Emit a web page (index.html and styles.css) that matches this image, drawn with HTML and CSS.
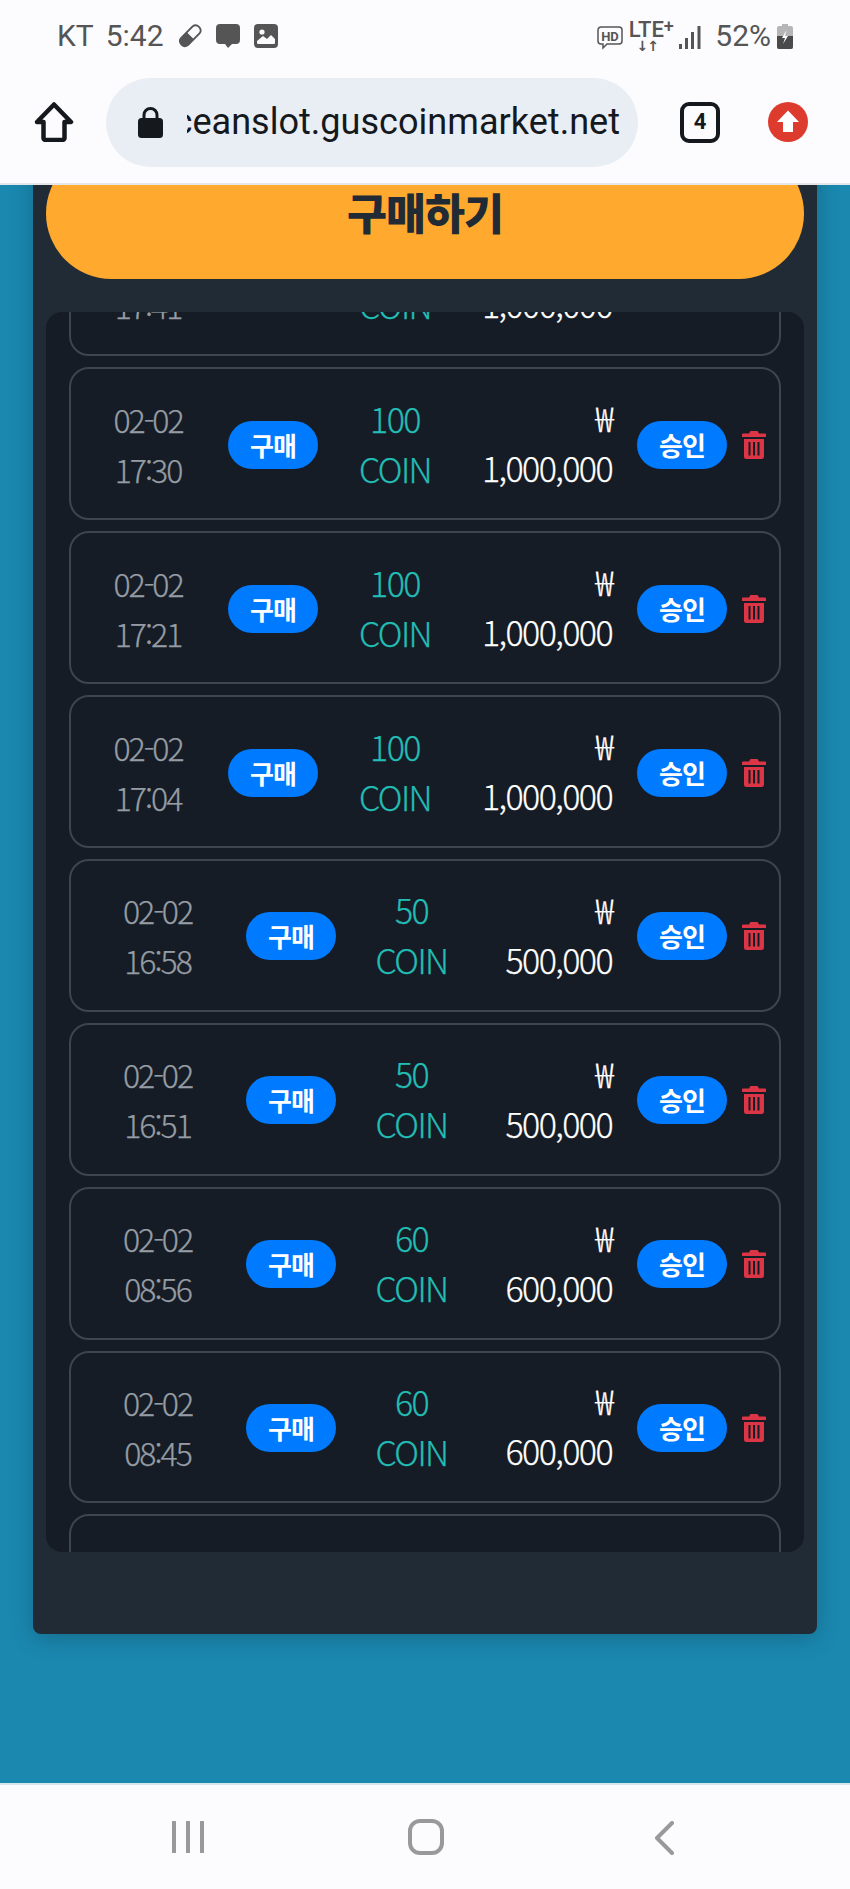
FILE: index.html
```html
<!DOCTYPE html>
<html lang="ko">
<head>
<meta charset="utf-8">
<title>구매하기</title>
<link rel="stylesheet" href="styles.css">
</head>
<body>
<div class="phone">
  <header class="chrome">
    <div class="status">
      <div class="status-left">
        <span class="carrier">KT</span>
        <span class="clock">5:42</span>
        <svg class="si si-pill" viewBox="0 0 24 24"><path d="M14.5 2.5a5 5 0 0 1 7 7L10 21a5 5 0 0 1-7-7z" fill="#fcfcfe" stroke="#555" stroke-width="1.8"/><path d="M8.8 8.2l7 7L10 21a5 5 0 0 1-7-7z" fill="#555"/></svg>
        <svg class="si si-chat" viewBox="0 0 24 24"><path d="M4 0h16a4 4 0 0 1 4 4v12a4 4 0 0 1-4 4h-4l-4 4-3-4H4a4 4 0 0 1-4-4V4a4 4 0 0 1 4-4z" fill="#555"/></svg>
        <svg class="si si-img" viewBox="0 0 24 24"><rect width="24" height="24" rx="4" fill="#555"/><path d="M3 17l6-5 4 3 4-4 4 4v4a1 1 0 0 1-1 1H4a1 1 0 0 1-1-1z" fill="#fcfcfe"/><circle cx="8" cy="8" r="2.6" fill="#fcfcfe"/></svg>
      </div>
      <div class="status-right">
        <svg class="si-hd" viewBox="0 0 26 24"><path d="M4 1h18a3 3 0 0 1 3 3v11a3 3 0 0 1-3 3H10l-4 4v-4H4a3 3 0 0 1-3-3V4a3 3 0 0 1 3-3z" fill="none" stroke="#555" stroke-width="1.5"/><text x="13" y="14.5" text-anchor="middle" class="hd-text">HD</text></svg>
        <div class="lte">
          <span class="lte-text">LTE<sup>+</sup></span>
          <span class="lte-arrows">↓↑</span>
        </div>
        <svg class="si-signal" viewBox="0 0 22 24"><rect x="0" y="18" width="3" height="5" fill="#555"/><rect x="6" y="12" width="3" height="11" fill="#555"/><rect x="12" y="6" width="3" height="17" fill="#555"/><rect x="18.500" y="0" width="3" height="23" fill="#555"/></svg>
        <span class="pct">52%</span>
        <svg class="si-batt" viewBox="0 0 16 25"><path d="M5 0h6v2h3a2 2 0 0 1 2 2v19a2 2 0 0 1-2 2H2a2 2 0 0 1-2-2V4a2 2 0 0 1 2-2h3z" fill="#b5b5b5"/><path d="M0 12h16v11a2 2 0 0 1-2 2H2a2 2 0 0 1-2-2z" fill="#4a4a4a"/><path d="M9.500 6L5 14h3l-2 6 5-8H8z" fill="#fcfcfe"/></svg>
      </div>
    </div>
    <div class="toolbar">
      <svg class="home" viewBox="0 0 40 40"><path d="M20 2.500L37 20h-6.500v16a2 2 0 0 1-2 2h-17a2 2 0 0 1-2-2V20H3z" fill="none" stroke="#15191e" stroke-width="4.500" stroke-linejoin="round"/></svg>
      <div class="urlbar">
        <svg class="lock" viewBox="0 0 25 31"><path d="M6 13V8a6.500 6.500 0 0 1 13 0v5" fill="none" stroke="#15191e" stroke-width="3"/><rect x="0" y="11" width="25" height="20" rx="3.500" fill="#15191e"/></svg>
        <div class="url"><span>oceanslot.guscoinmarket.net</span></div>
      </div>
      <div class="tabs">4</div>
      <svg class="update" viewBox="0 0 40 40"><circle cx="20" cy="20" r="20" fill="#dc3b2e"/><path d="M20 8.500L31 20h-6v10H15V20H9z" fill="#fff"/></svg>
    </div>
  </header>

  <main class="viewport">
    <section class="panel">
      <button class="buy" type="button">구매하기</button>
      <div class="list">
        <div class="track">
          <article class="row row-m">
            <div class="date"><span>02-02</span><span>17:41</span></div>
            <span class="pill">구매</span>
            <div class="coin"><span>100</span><span>COIN</span></div>
            <div class="amount"><span>₩</span><span>1,000,000</span></div>
            <span class="pill pill-status">승인</span>
            <svg class="trash" viewBox="0 0 24 28"><use href="#trash-icon"/></svg>
          </article>
          <article class="row row-m">
            <div class="date"><span>02-02</span><span>17:30</span></div>
            <span class="pill">구매</span>
            <div class="coin"><span>100</span><span>COIN</span></div>
            <div class="amount"><span>₩</span><span>1,000,000</span></div>
            <span class="pill pill-status">승인</span>
            <svg class="trash" viewBox="0 0 24 28"><use href="#trash-icon"/></svg>
          </article>
          <article class="row row-m">
            <div class="date"><span>02-02</span><span>17:21</span></div>
            <span class="pill">구매</span>
            <div class="coin"><span>100</span><span>COIN</span></div>
            <div class="amount"><span>₩</span><span>1,000,000</span></div>
            <span class="pill pill-status">승인</span>
            <svg class="trash" viewBox="0 0 24 28"><use href="#trash-icon"/></svg>
          </article>
          <article class="row row-m">
            <div class="date"><span>02-02</span><span>17:04</span></div>
            <span class="pill">구매</span>
            <div class="coin"><span>100</span><span>COIN</span></div>
            <div class="amount"><span>₩</span><span>1,000,000</span></div>
            <span class="pill pill-status">승인</span>
            <svg class="trash" viewBox="0 0 24 28"><use href="#trash-icon"/></svg>
          </article>
          <article class="row row-s">
            <div class="date"><span>02-02</span><span>16:58</span></div>
            <span class="pill">구매</span>
            <div class="coin"><span>50</span><span>COIN</span></div>
            <div class="amount"><span>₩</span><span>500,000</span></div>
            <span class="pill pill-status">승인</span>
            <svg class="trash" viewBox="0 0 24 28"><use href="#trash-icon"/></svg>
          </article>
          <article class="row row-s">
            <div class="date"><span>02-02</span><span>16:51</span></div>
            <span class="pill">구매</span>
            <div class="coin"><span>50</span><span>COIN</span></div>
            <div class="amount"><span>₩</span><span>500,000</span></div>
            <span class="pill pill-status">승인</span>
            <svg class="trash" viewBox="0 0 24 28"><use href="#trash-icon"/></svg>
          </article>
          <article class="row row-s">
            <div class="date"><span>02-02</span><span>08:56</span></div>
            <span class="pill">구매</span>
            <div class="coin"><span>60</span><span>COIN</span></div>
            <div class="amount"><span>₩</span><span>600,000</span></div>
            <span class="pill pill-status">승인</span>
            <svg class="trash" viewBox="0 0 24 28"><use href="#trash-icon"/></svg>
          </article>
          <article class="row row-s">
            <div class="date"><span>02-02</span><span>08:45</span></div>
            <span class="pill">구매</span>
            <div class="coin"><span>60</span><span>COIN</span></div>
            <div class="amount"><span>₩</span><span>600,000</span></div>
            <span class="pill pill-status">승인</span>
            <svg class="trash" viewBox="0 0 24 28"><use href="#trash-icon"/></svg>
          </article>
          <article class="row row-s"></article>
        </div>
      </div>
    </section>
  </main>

  <nav class="navbar">
    <svg class="nav-recent" viewBox="0 0 32 32"><path d="M2 1v30M16 1v30M30 1v30" fill="none" stroke="#999" stroke-width="4" stroke-linecap="round"/></svg>
    <svg class="nav-home" viewBox="0 0 36 36"><rect x="2" y="2" width="32" height="32" rx="10" fill="none" stroke="#999" stroke-width="4"/></svg>
    <svg class="nav-back" viewBox="0 0 20 34"><path d="M18 2L3 17l15 15" fill="none" stroke="#999" stroke-width="4" stroke-linecap="round" stroke-linejoin="round"/></svg>
  </nav>
</div>
<svg class="defs" aria-hidden="true">
  <symbol id="trash-icon" viewBox="0 0 24 28">
    <path fill="#dc3545" fill-rule="evenodd" d="M8.500 0h7l1.500 2.500h6a1 1 0 0 1 1 1V6H0V3.500a1 1 0 0 1 1-1h6zM2 8h20v17.500a2.500 2.500 0 0 1-2.500 2.500h-15A2.500 2.500 0 0 1 2 25.500zM6.500 11v13.500h2V11zM11 11v13.500h2V11zM15.500 11v13.500h2V11z"/>
  </symbol>
</svg>
</body>
</html>
```
FILE: styles.css
```css
* { box-sizing: border-box; }
html, body { margin: 0; padding: 0; }
body { width: 850px; height: 1889px; overflow: hidden; font-family: "Noto Sans CJK KR", "Noto Sans", sans-serif; }
.defs { position: absolute; width: 0; height: 0; }
.phone { width: 850px; height: 1889px; display: flex; flex-direction: column; background: #1b88b0; }

/* browser chrome */
.chrome { height: 185px; flex: none; background: #fcfcfe; border-bottom: 2px solid #e4e7ea; position: relative; z-index: 2; }
.status { height: 75px; display: flex; justify-content: space-between; align-items: flex-start; padding: 18px 57px 0 57px; color: #555; font-family: Roboto, sans-serif; font-size: 30px; line-height: 36px; }
.status-left, .status-right { display: flex; align-items: center; height: 36px; }
.clock { margin-left: 12px; }
.si { width: 24px; height: 24px; }
.si-pill { margin-left: 14px; }
.si-chat { margin-left: 14px; }
.si-img { margin-left: 14px; }
.si-hd { width: 26px; height: 24px; margin-top: 4px; margin-right: 1px; }
.hd-text { font-family: Roboto, sans-serif; font-size: 13px; font-weight: 700; fill: #555; }
.lte { display: flex; flex-direction: column; align-items: center; margin-left: 6px; width: 42px; color: #555; }
.lte-text { font-family: Roboto, sans-serif; font-size: 22px; line-height: 20px; font-weight: 500; white-space: nowrap; }
.lte-text sup { font-size: 18px; line-height: 0; vertical-align: 5px; }
.lte-arrows { font-family: "DejaVu Sans", sans-serif; font-size: 14px; line-height: 13px; font-weight: 700; letter-spacing: -1px; margin-left: -8px; }
.si-signal { width: 22px; height: 24px; margin-left: 7px; margin-top: 3px; }
.pct { margin-left: 14px; font-size: 30px; }
.si-batt { width: 16px; height: 25px; margin-left: 6px; }

.toolbar { display: flex; align-items: center; padding: 3px 42px 0 34px; height: 91px; }
.home { width: 40px; height: 40px; flex: none; }
.urlbar { width: 532px; height: 89px; margin-left: 32px; border-radius: 45px; background: #e8eef3; display: flex; align-items: center; padding: 0 18px 0 32px; }
.lock { width: 25px; height: 31px; flex: none; }
.url { width: 433px; margin-left: 24px; overflow: hidden; font-family: Roboto, sans-serif; font-size: 36.1px; line-height: 50px; color: #15191e; white-space: nowrap; display: flex; justify-content: flex-end; }
.tabs { width: 40px; height: 41px; margin-left: 42px; flex: none; border: 4.5px solid #15191e; border-radius: 9px; font-family: Roboto, sans-serif; font-size: 22px; font-weight: 700; line-height: 32px; text-align: center; color: #15191e; }
.update { width: 40px; height: 40px; margin-left: 48px; flex: none; }

/* page */
.viewport { flex: 1; min-height: 0; overflow: hidden; padding: 0 33px; }
.panel { margin-top: -50px; padding: 13px 13px 82px; background: #212b36; border-radius: 8px; box-shadow: 0 4px 24px rgba(0, 0, 0, .22); }
.buy { display: block; width: 100%; height: 131px; border: 0; border-radius: 66px; background: #ffa92e; color: #212b36; font-family: inherit; font-size: 43.5px; font-weight: 900; letter-spacing: -1px; padding: 0 0 4px; }
.list { margin-top: 33px; height: 1240px; overflow: hidden; background: #161c25; border-radius: 16px; padding: 0 23px; }
.track { display: flow-root; margin-top: -108.5px; }
.row { height: 152.86px; margin-bottom: 11px; padding-top: 2px; border: 2px solid #3d4550; border-radius: 20px; display: flex; align-items: center; font-size: 34px; line-height: 50px; font-weight: 300; letter-spacing: -1.6px; -webkit-text-stroke: .25px; }
.date, .coin, .amount { display: flex; flex-direction: column; }
.date { color: #959ca4; align-items: center; font-size: 32px; letter-spacing: -2px; margin-top: -2px; }
.coin { color: #22bdb4; align-items: center; margin-top: -2px; }
.amount { color: #fff; align-items: flex-end; margin-left: auto; margin-right: 1px; margin-top: -3px; }
.row-m .date { width: 154px; }
.row-m .coin { width: 154px; }
.row-s .date { width: 173px; }
.row-s .coin { width: 151px; }
.pill { flex: none; width: 90px; height: 48px; border-radius: 24px; background: #007bff; color: #fff; font-size: 26px; font-weight: 700; line-height: 48px; text-align: center; letter-spacing: -1px; -webkit-text-stroke: 0; }
.row-m .pill:not(.pill-status) { margin-left: 3px; }
.row-s .pill:not(.pill-status) { margin-left: 2px; }
.pill-status { margin-left: 24px; }
.trash { width: 24px; height: 28px; margin-left: 15px; margin-right: 13px; flex: none; }

/* android nav */
.navbar { height: 106px; flex: none; background: #fcfcfe; border-top: 2px solid #d8e6ec; position: relative; z-index: 2; display: flex; align-items: flex-start; padding-top: 36px; }
.nav-recent { width: 32px; height: 32px; margin-left: 172px; }
.nav-home { width: 36px; height: 36px; margin-left: 204px; margin-top: -2px; }
.nav-back { width: 20px; height: 34px; margin-left: 210px; }
```
